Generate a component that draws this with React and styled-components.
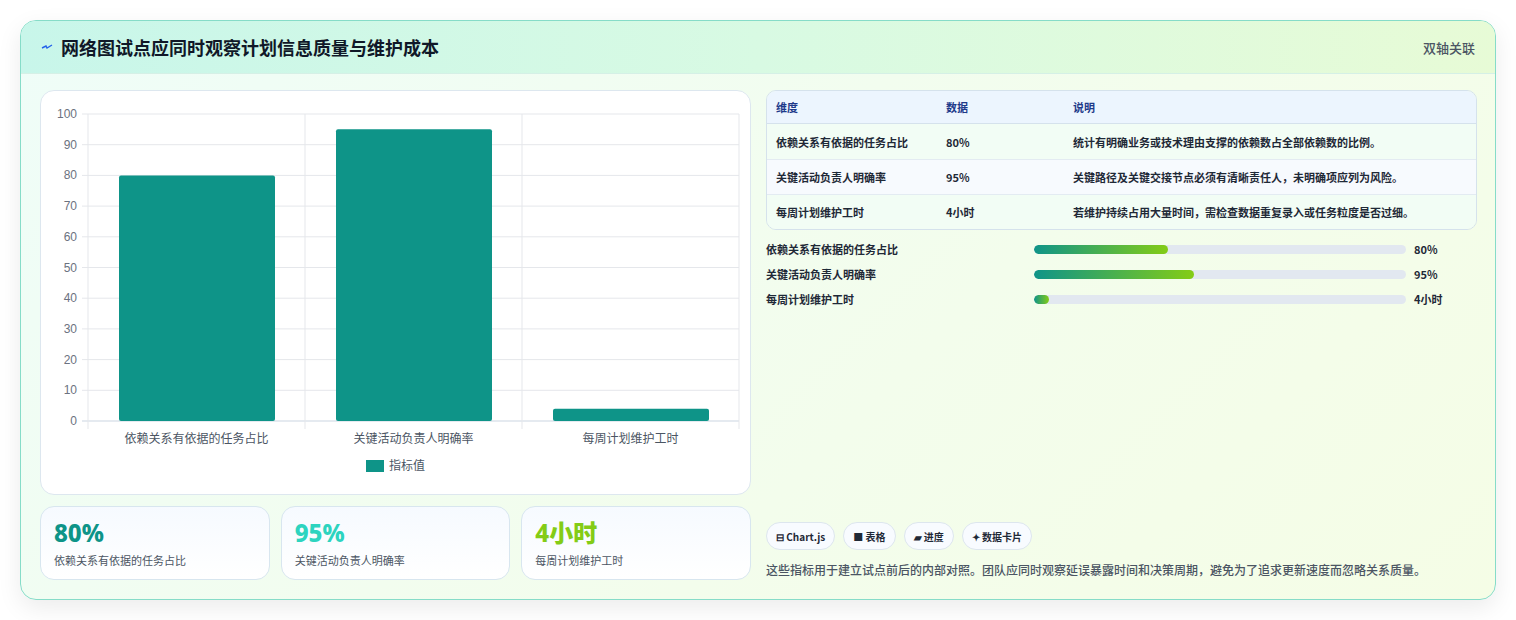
import React from "react";
import styled, { createGlobalStyle } from "styled-components";

const Global = createGlobalStyle`
  body { margin: 0; background: #fff; font-family: "Noto Sans CJK SC", "Noto Sans", sans-serif; }
  * { box-sizing: border-box; }
`;
const Page = styled.div`padding: 20px 20px 20px 20px; width: 1516px;`;
const Card = styled.div`
  width: 1476px; height: 580px; border: 1px solid #86dcc8; border-radius: 16px;
  background: linear-gradient(135deg, #effdf8 0%, #f3fdec 60%, #f5fde6 100%);
  box-shadow: 0 8px 24px rgba(0,0,0,0.08); overflow: hidden; display: flex; flex-direction: column;
`;
const Header = styled.div`
  height: 55px; display: flex; align-items: center; justify-content: space-between; padding: 0 20px 0 20px;
  background: linear-gradient(90deg, #c8f6ea 0%, #d8fae3 50%, #e7fbd6 100%);
  border-bottom: 1px solid #d5f0e6;
`;
const Title = styled.h1`margin: 0; font-size: 18px; font-weight: 700; color: #101828; display: flex; align-items: center; gap: 8px;`;
const Tag = styled.span`font-size: 13px; color: #4b5563; font-weight: 500;`;
const Body = styled.div`flex: 1; display: grid; grid-template-columns: 711px 711px; gap: 15px; padding: 16px 19px 19px 19px;`;
const Col = styled.div`display: flex; flex-direction: column; gap: 11px; min-height: 0;`;
const Panel = styled.div`height: 405px; background: #fff; border: 1px solid #dde7ef; border-radius: 14px;`;
const Stats = styled.div`display: grid; grid-template-columns: repeat(3, 1fr); gap: 11px;`;
const Stat = styled.div`height: 74px; border: 1px solid #d8e6ef; border-radius: 14px; background: linear-gradient(180deg, #f6faff, #fff); padding: 10px 13px;`;
const StatNum = styled.div`font-size: 24px; font-weight: 800; color: ${p => p.c}; line-height: 32px; font-family: "Noto Sans", "Noto Sans CJK SC", sans-serif;`;
const StatLabel = styled.div`font-size: 11px; color: #4b5563; margin-top: 3px;`;
const Table = styled.table`width: 100%; border-collapse: separate; border-spacing: 0; border: 1px solid #d5e2ec; border-radius: 10px; overflow: hidden; font-size: 11px; color: #1f2937;`;
const Th = styled.th`text-align: left; font-weight: 600; color: #1e3a8a; background: #ecf5fe; height: 33px; padding: 0 9px; border-bottom: 1px solid #d5e2ec; width: ${p => p.w || "auto"};`;
const Td = styled.td`height: 35px; padding: 0 9px; font-weight: 600; background: ${p => p.alt ? "#f7fafe" : "#f2fdf5"}; border-top: ${p => p.first ? "none" : "1px solid #e3ebf2"};`;
const Bars = styled.div`display: flex; flex-direction: column; gap: 9px; margin-top: 2px;`;
const BarRow = styled.div`display: grid; grid-template-columns: 268px 372px 1fr; align-items: center; gap: 0; font-size: 11px; font-weight: 600; color: #1f2937; height: 16px;`;
const Track = styled.div`height: 9px; border-radius: 5px; background: #e2e8f0; overflow: hidden;`;
const Fill = styled.div`height: 100%; border-radius: 5px; background: linear-gradient(90deg, #0f9488, #84cc16);`;
const Val = styled.span`padding-left: 8px;`;
const Spacer = styled.div`flex: 1;`;
const Chips = styled.div`display: flex; gap: 8px;`;
const Chip = styled.span`height: 28px; padding: 0 9px; border: 1px solid #dde6ee; border-radius: 14px; background: #f8fbff; font-size: 10px; font-weight: 700; color: #1f2937; display: inline-flex; align-items: center; gap: 3px;`;
const Note = styled.p`margin: 10px 0 0; font-size: 12px; line-height: 20px; color: #4b5563; font-weight: 500;`;

const Chart = () => {
  const x0 = 47, x1 = 698, yTop = 23, yB = 330;
  const yOf = v => yB - (v / 100) * (yB - yTop);
  const ticks = [0,10,20,30,40,50,60,70,80,90,100];
  const cats = [["依赖关系有依据的任务占比",80],["关键活动负责人明确率",95],["每周计划维护工时",4]];
  const cw = (x1 - x0) / 3;
  return (
    <svg width="709" height="403" style={{display:"block"}} fontFamily='"Noto Sans CJK SC", sans-serif'>
      {ticks.map(t => (
        <g key={t}>
          <line x1={x0-6} x2={x1} y1={yOf(t)} y2={yOf(t)} stroke={t===0?"#cbd5e1":"#e5e7eb"} />
          <text x={x0-11} y={yOf(t)+4} fontSize="12" fill="#6b7280" textAnchor="end" fontFamily='"Liberation Sans", sans-serif'>{t}</text>
        </g>
      ))}
      {[0,1,2,3].map(i => <line key={i} x1={x0+cw*i} x2={x0+cw*i} y1={yTop} y2={yB+8} stroke="#e5e7eb" />)}
      {cats.map(([n,v],i) => (
        <g key={n}>
          <rect x={x0+cw*i+31} y={yOf(v)} width={156} height={yB-yOf(v)} rx="2" fill="#0e9488" />
          <text x={x0+cw*i+cw/2} y={352} fontSize="12" fill="#4b5563" textAnchor="middle">{n}</text>
        </g>
      ))}
      <rect x={325} y={369} width={18} height={12} fill="#0e9488" />
      <text x={348} y={379} fontSize="12" fill="#4b5563">指标值</text>
    </svg>
  );
};

const rows = [
  ["依赖关系有依据的任务占比","80%","统计有明确业务或技术理由支撑的依赖数占全部依赖数的比例。",36],
  ["关键活动负责人明确率","95%","关键路径及关键交接节点必须有清晰责任人，未明确项应列为风险。",43],
  ["每周计划维护工时","4小时","若维护持续占用大量时间，需检查数据重复录入或任务粒度是否过细。",4],
];

export default function App() {
  return (
    <Page>
      <Global />
      <Card>
        <Header>
          <Title>
            <svg width="12" height="8" viewBox="0 0 12 8"><path d="M1 5 L5 3 L6 5 L11 2" stroke="#2563eb" strokeWidth="1.4" fill="none"/></svg>
            网络图试点应同时观察计划信息质量与维护成本
          </Title>
          <Tag>双轴关联</Tag>
        </Header>
        <Body>
          <Col>
            <Panel><Chart /></Panel>
            <Stats>
              <Stat><StatNum c="#0e9488">80%</StatNum><StatLabel>依赖关系有依据的任务占比</StatLabel></Stat>
              <Stat><StatNum c="#2dd4bf">95%</StatNum><StatLabel>关键活动负责人明确率</StatLabel></Stat>
              <Stat><StatNum c="#84cc16">4小时</StatNum><StatLabel>每周计划维护工时</StatLabel></Stat>
            </Stats>
          </Col>
          <Col style={{gap: 0}}>
            <Table>
              <thead><tr><Th w="170px">维度</Th><Th w="127px">数据</Th><Th>说明</Th></tr></thead>
              <tbody>
                {rows.map((r,i) => (
                  <tr key={r[0]}>
                    <Td alt={i===1} first={i===0}>{r[0]}</Td>
                    <Td alt={i===1} first={i===0}>{r[1]}</Td>
                    <Td alt={i===1} first={i===0}>{r[2]}</Td>
                  </tr>
                ))}
              </tbody>
            </Table>
            <Bars style={{marginTop: 11}}>
              {rows.map(r => (
                <BarRow key={r[0]}>
                  <span>{r[0]}</span>
                  <Track><Fill style={{width: r[3] + "%"}} /></Track>
                  <Val>{r[1]}</Val>
                </BarRow>
              ))}
            </Bars>
            <Spacer />
            <Chips>
              <Chip>⊟ Chart.js</Chip>
              <Chip>■ 表格</Chip>
              <Chip>▰ 进度</Chip>
              <Chip>✦ 数据卡片</Chip>
            </Chips>
            <Note>这些指标用于建立试点前后的内部对照。团队应同时观察延误暴露时间和决策周期，避免为了追求更新速度而忽略关系质量。</Note>
          </Col>
        </Body>
      </Card>
    </Page>
  );
}
